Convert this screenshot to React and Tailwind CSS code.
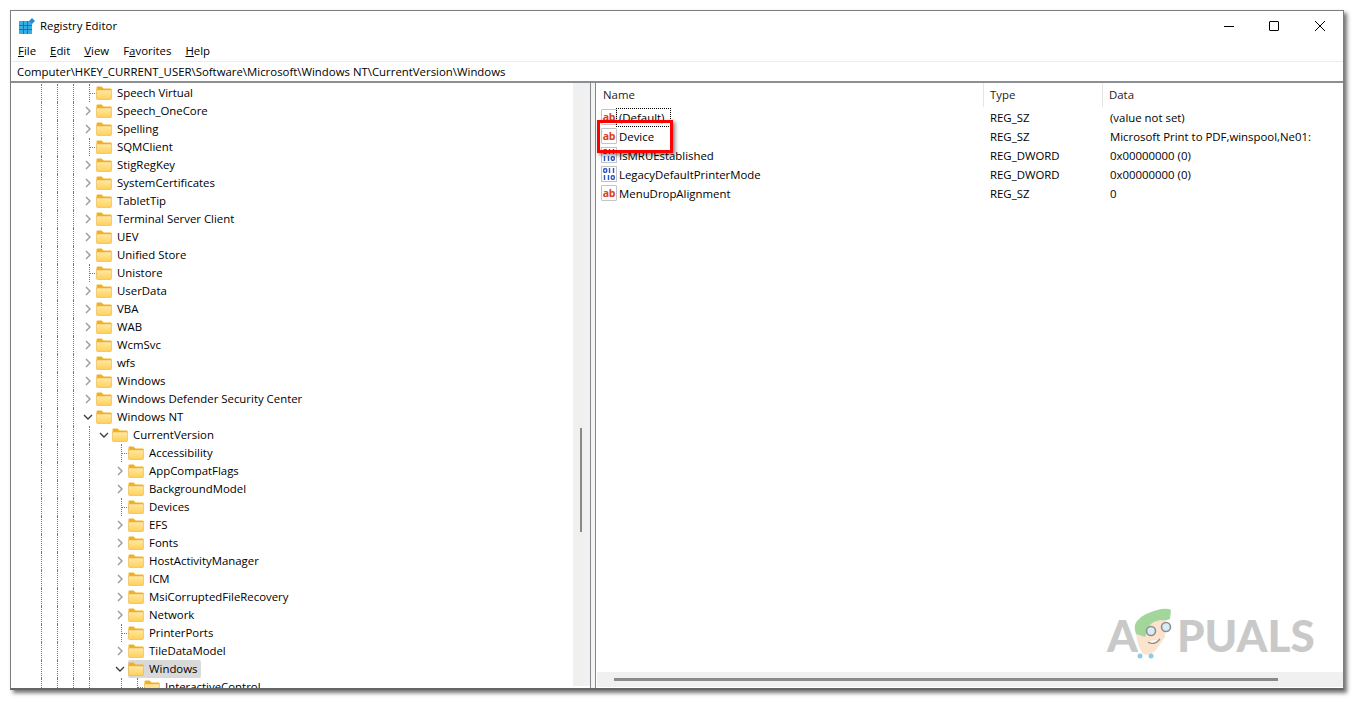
import React from "react";

const tree = [
  ["Speech Virtual", 0, "leaf"],
  ["Speech_OneCore", 0, "closed"],
  ["Spelling", 0, "closed"],
  ["SQMClient", 0, "leaf"],
  ["StigRegKey", 0, "closed"],
  ["SystemCertificates", 0, "closed"],
  ["TabletTip", 0, "closed"],
  ["Terminal Server Client", 0, "closed"],
  ["UEV", 0, "closed"],
  ["Unified Store", 0, "closed"],
  ["Unistore", 0, "leaf"],
  ["UserData", 0, "closed"],
  ["VBA", 0, "closed"],
  ["WAB", 0, "closed"],
  ["WcmSvc", 0, "closed"],
  ["wfs", 0, "closed"],
  ["Windows", 0, "closed"],
  ["Windows Defender Security Center", 0, "closed"],
  ["Windows NT", 0, "open"],
  ["CurrentVersion", 1, "open"],
  ["Accessibility", 2, "leaf"],
  ["AppCompatFlags", 2, "closed"],
  ["BackgroundModel", 2, "closed"],
  ["Devices", 2, "leaf"],
  ["EFS", 2, "closed"],
  ["Fonts", 2, "closed"],
  ["HostActivityManager", 2, "closed"],
  ["ICM", 2, "closed"],
  ["MsiCorruptedFileRecovery", 2, "closed"],
  ["Network", 2, "closed"],
  ["PrinterPorts", 2, "leaf"],
  ["TileDataModel", 2, "closed"],
  ["Windows", 2, "open"],
  ["InteractiveControl", 3, "leaf"],
];

const values = [
  ["(Default)", "ab", "REG_SZ", "(value not set)"],
  ["Device", "ab", "REG_SZ", "Microsoft Print to PDF,winspool,Ne01:"],
  ["IsMRUEstablished", "bin", "REG_DWORD", "0x00000000 (0)"],
  ["LegacyDefaultPrinterMode", "bin", "REG_DWORD", "0x00000000 (0)"],
  ["MenuDropAlignment", "ab", "REG_SZ", "0"],
];

function Folder() {
  return (
    <svg width="16" height="14" viewBox="0 0 16 14" className="shrink-0">
      <defs>
        <linearGradient id="fold" x1="0" y1="0" x2="0" y2="1">
          <stop offset="0" stopColor="#ffe9a6" />
          <stop offset="1" stopColor="#ffcf57" />
        </linearGradient>
      </defs>
      <path d="M0.5 1.5 Q0.5 0.5 1.5 0.5 H5.5 L7.5 2.5 H15 Q15.5 2.5 15.5 3.5 V5 H0.5 Z" fill="#f2b01e" />
      <path d="M0.5 4 H15.5 V12.5 Q15.5 13.5 14.5 13.5 H1.5 Q0.5 13.5 0.5 12.5 Z" fill="url(#fold)" stroke="#e9b44a" strokeWidth="0.6" />
    </svg>
  );
}

function Chevron({ open }) {
  return (
    <svg width="10" height="10" viewBox="0 0 10 10">
      {open ? (
        <path d="M1 3 L5 7 L9 3" fill="none" stroke="#404040" strokeWidth="1.4" />
      ) : (
        <path d="M3 1 L7 5 L3 9" fill="none" stroke="#9a9a9a" strokeWidth="1.4" />
      )}
    </svg>
  );
}

// one indent column with a dotted vertical line
function Guide() {
  return (
    <div className="w-[16px] h-full shrink-0 pl-[8px]">
      <div className="h-full border-l border-dotted border-[#777]" />
    </div>
  );
}

function Empty() {
  return <div className="w-[16px] h-full shrink-0" />;
}

function TreeRow({ name, depth, kind, selected }) {
  return (
    <div className="flex items-center h-[18px] shrink-0 whitespace-nowrap">
      <div className="w-[22px] h-full shrink-0" />
      <Guide />
      <Guide />
      <Guide />
      {depth > 0 && <Guide />}
      {depth > 1 && <Empty />}
      {depth > 2 && <Guide />}
      {kind === "leaf" ? (
        <div className="w-[16px] h-full shrink-0 pl-[8px]">
          <div className="h-full border-l border-dotted border-[#777] pt-[9px]">
            <div className="w-[7px] border-t border-dotted border-[#777]" />
          </div>
        </div>
      ) : (
        <div className="w-[16px] h-full shrink-0 flex items-center pl-[2px]">
          <Chevron open={kind === "open"} />
        </div>
      )}
      <div className={`flex items-center h-full -ml-[1px] ${selected ? "rounded-[2px] bg-[#d9d9d9] pr-[4px]" : ""}`}>
        <Folder />
        <span className="ml-[5px]">{name}</span>
      </div>
    </div>
  );
}

function AbIcon() {
  return (
    <div className="w-[16px] h-[16px] shrink-0 pt-[3px] flex justify-center border border-[#c4c4c4] rounded-[1px] text-[#d8401c] font-bold text-[10.5px] leading-[9px] tracking-[-0.3px]">
      ab
    </div>
  );
}

function BinIcon() {
  return (
    <svg width="16" height="16" viewBox="0 0 16 16" className="shrink-0">
      <rect x="0.5" y="0.5" width="15" height="15" fill="none" stroke="#c4c4c4" />
      <g fill="none" stroke="#2f55c4" strokeWidth="1.4">
        <rect x="2.7" y="2.7" width="3" height="3.6" rx="1" />
        <path d="M8.5 2 V7 M12.5 2 V7" />
        <path d="M3.5 9 V14 M7.5 9 V14" />
        <rect x="10.3" y="9.7" width="3" height="3.6" rx="1" />
      </g>
    </svg>
  );
}

function Mascot() {
  return (
    <svg width="40" height="52" viewBox="0 0 40 52" className="shrink-0">
      <path d="M3 27 Q5 40 10 47 Q17 49 23 43 L32 30 L33 13 L14 12 Z" fill="#fbe3cd" />
      <path d="M3 27 Q0 19 4 14 Q10 6 28 2 Q35 1 38 3 L37 12 Q33 14 28 13 Q20 14 17 18 L12 30 Q7 28 3 27 Z" fill="#a3d69b" />
      <circle cx="18" cy="24" r="4.5" fill="#d6edf6" stroke="#8f8f8f" strokeWidth="1.6" />
      <circle cx="33" cy="20" r="4.5" fill="#d6edf6" stroke="#8f8f8f" strokeWidth="1.6" />
      <path d="M15 35 Q21 39 27 32" fill="#fff" stroke="#8a8a8a" strokeWidth="1.2" />
      <circle cx="7" cy="49" r="2.5" fill="#8fcbe2" />
      <circle cx="18" cy="49" r="2.5" fill="#8fcbe2" />
    </svg>
  );
}

function App() {
  return (
    <div
      className="relative w-[1355px] h-[702px] bg-white overflow-hidden pt-[10px] pl-[10px] text-[11.4px] text-black"
      style={{ fontFamily: '"Open Sans", "Noto Sans", sans-serif' }}
    >
      <div className="flex flex-col w-[1334px] h-[680px] bg-white border border-[#7d7d7d] border-b-2 border-b-[#666] shadow-[3px_3px_4px_rgba(0,0,0,0.55)]">
        {/* title bar */}
        <div className="flex items-center h-[30px] shrink-0 pl-[8px]">
          <svg width="16" height="16" viewBox="0 0 16 16">
            <rect x="0" y="3" width="13" height="13" fill="#35aee8" />
            <path d="M0 7.5 H13 M0 11.5 H13 M4.5 3 V16 M8.5 3 V16" stroke="#0f6fb8" strokeWidth="0.9" />
            <path d="M13 0 L16 3 L13 6 L10 3 Z" fill="#1f8fd6" />
          </svg>
          <span className="ml-[5px]">Registry Editor</span>
          <div className="ml-auto flex items-center pr-[18px]">
            <div className="w-[10px] h-[1px] bg-black" />
            <div className="ml-[35px] w-[10px] h-[10px] border border-black rounded-[1px]" />
            <svg width="10" height="10" viewBox="0 0 10 10" className="ml-[36px]">
              <path d="M0 0 L10 10 M10 0 L0 10" stroke="#000" strokeWidth="1" />
            </svg>
          </div>
        </div>
        {/* menu */}
        <div className="flex items-center h-[20px] shrink-0 pl-[7px] gap-[14px]">
          <span><u>F</u>ile</span>
          <span><u>E</u>dit</span>
          <span><u>V</u>iew</span>
          <span>F<u>a</u>vorites</span>
          <span><u>H</u>elp</span>
        </div>
        {/* address bar */}
        <div className="flex items-center h-[22px] shrink-0 pl-[6px] pt-[1px] border-t border-[#ececec] border-b-2 border-b-[#8a8f93]">
          Computer\HKEY_CURRENT_USER\Software\Microsoft\Windows NT\CurrentVersion\Windows
        </div>
        <div className="flex flex-1 min-h-0">
          {/* left pane */}
          <div className="flex w-[579px] shrink-0 min-h-0">
            <div className="flex flex-col flex-1 min-w-0 pt-[1px] overflow-hidden">
              {tree.map(([name, depth, kind], i) => (
                <TreeRow key={i} name={name} depth={depth} kind={kind} selected={i === 32} />
              ))}
            </div>
            <div className="w-[17px] shrink-0 bg-[#f0f0f0] pl-[7px] pt-[345px] mb-[2px]">
              <div className="w-[2px] h-[104px] bg-[#8a8a8a]" />
            </div>
          </div>
          {/* splitter */}
          <div className="w-[6px] shrink-0 border-x border-[#84888c] bg-[#f4f4f4]" />
          {/* right pane */}
          <div className="flex flex-col flex-1 min-w-0">
            <div className="flex items-center h-[24px] shrink-0 text-[#222]">
              <div className="w-[388px] h-full flex items-center pl-[7px] border-r border-[#e5e5e5]">Name</div>
              <div className="w-[119px] h-full flex items-center pl-[6px] border-r border-[#e5e5e5]">Type</div>
              <div className="pl-[6px]">Data</div>
            </div>
            <div className="flex flex-col flex-1 min-h-0 pt-[1px]">
              {values.map(([name, icon, type, data], i) => (
                <div key={name} className="flex items-center h-[19px] shrink-0 whitespace-nowrap">
                  <div className="w-[388px] flex items-center pl-[5px]">
                    {icon === "ab" ? <AbIcon /> : <BinIcon />}
                    <span className={`pl-[2px] ${i === 0 ? "pr-[6px] outline-1 outline-dotted outline-black" : ""}`}>{name}</span>
                  </div>
                  <div className="w-[120px] pl-[6px]">{type}</div>
                  <div className="pl-[6px]">{data}</div>
                </div>
              ))}
            </div>
            <div className="flex items-center h-[15px] shrink-0 ml-[1px] mb-[1px] bg-[#f0f0f0] pl-[17px]">
              <div className="w-[664px] h-[3px] bg-[#8a8a8a]" />
            </div>
          </div>
        </div>
      </div>

      {/* red highlight over the Device row */}
      <div className="absolute left-[597px] top-[120px] w-[76px] h-[33px] border-[3px] border-[#ff0000] shadow-[2px_2px_4px_rgba(0,0,0,0.5)]" />

      {/* watermark */}
      <div className="absolute left-[1107px] top-[607px] flex items-end h-[52px] text-[#c9c9c9] font-black text-[44px] leading-[48px]" style={{ fontFamily: "Lato, sans-serif" }}>
        <span className="w-[26px]">A</span>
        <Mascot />
        <span className="ml-[4px]">PUALS</span>
      </div>
    </div>
  );
}

export default App;
